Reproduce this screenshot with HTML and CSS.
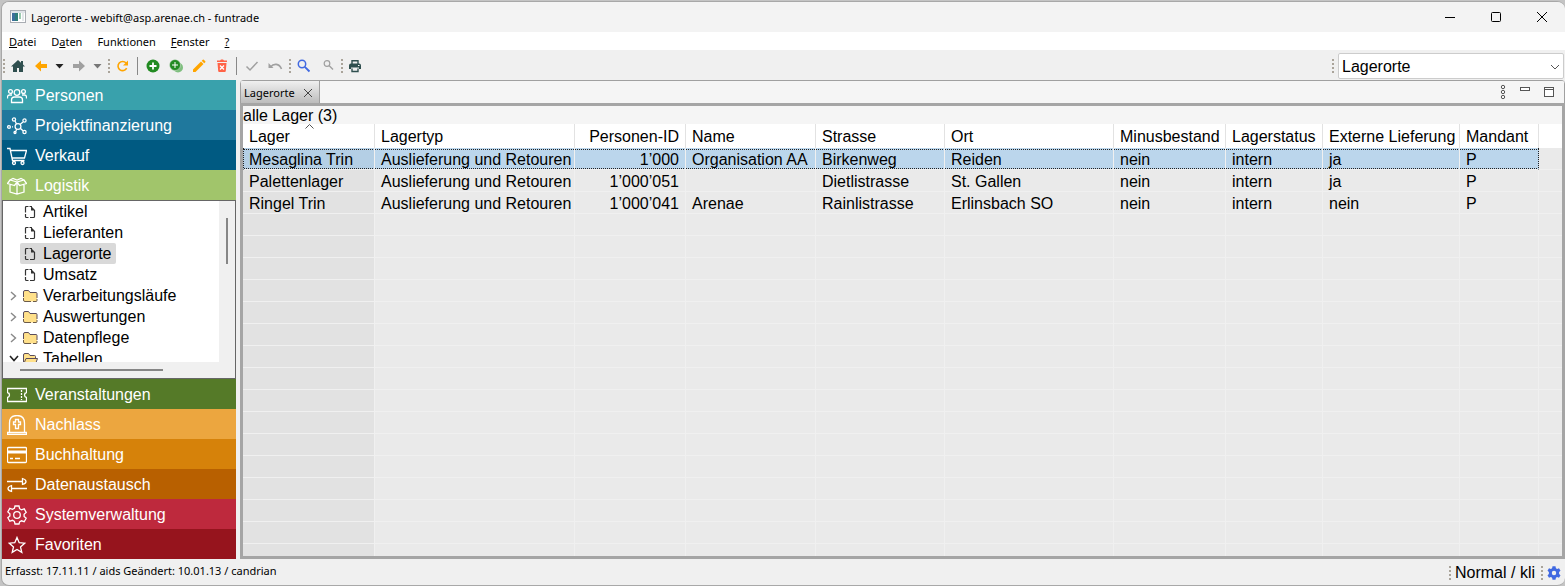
FILE: index.html
```html
<!DOCTYPE html>
<html lang="de">

<head>
    <meta charset="UTF-8">
    <meta name="viewport" content="width=device-width, initial-scale=1.0">
    <title>Lagerorte - webift@asp.arenae.ch - funtrade</title>
    <link rel="stylesheet" href="styles.css">
</head>

<body>
    <!-- tree icons, used several times -->
    <svg class="symbols" width="0" height="0">
        <symbol id="doc" viewBox="0 0 16 16"><path d="M5.500 2.500H3.500q-1 0-1 1v5M2.500 10v2.500q0 1 1 1h2M7 13.500h3.500q1 0 1-1V6M6.500 2.500H9" fill="none" stroke="#333" stroke-width="1.200"/><path d="M8 2l4 4v.6H8z" fill="#333"/></symbol>
        <symbol id="folder" viewBox="0 0 16 16"><path d="M.5 4q0-1.500 1.500-1.500h3.500L7 4.500h6q1 0 1 1V12q0 1.500-1 1.500H2Q.5 13.500.5 12z" fill="#ffe08a"/><path d="M.5 9V4q0-1.500 1.500-1.500h3.500L7 4.500h6q1 0 1 1V10" fill="none" stroke="#5a4d5c"/><path d="M.5 10v2q0 1.500 1.500 1.500h6M10 13.500h3q1 0 1-1V11" fill="none" stroke="#6b5b4a"/></symbol>
        <symbol id="folder-open" viewBox="0 0 16 16"><path d="M.5 13V4q0-1.500 1.500-1.500h3.500L7 4.500h4.500q1 0 1 1V7.500" fill="#ffe08a" stroke="#5a4d5c"/><path d="M.5 13.500L3 7.500h11.500L12.500 13q-.3.500-1 .5z" fill="#ffe08a" stroke="#5a4d5c"/></symbol>
        <symbol id="closed" viewBox="0 0 7 10"><path d="M1 1l4.500 4L1 9" fill="none" stroke="#888" stroke-width="1.400"/></symbol>
    </svg>

    <div class="window">
        <header class="titlebar">
            <svg class="app-icon" width="16" height="14" viewBox="0 0 16 14">
                <rect x="0.5" y="0.5" width="15" height="12" fill="#fff" stroke="#a9adb3"/>
                <rect x="1" y="1" width="14" height="2" fill="#dfe3e8"/>
                <rect x="2" y="3" width="6" height="8" fill="#2f7d7a"/>
                <rect x="2" y="3" width="3" height="8" fill="#3d6f9c"/>
                <rect x="9" y="3" width="2" height="6" fill="#9ccbb0"/>
                <rect x="12" y="3" width="2" height="8" fill="#e3e7ea"/>
            </svg>
            <span class="title">Lagerorte - webift@asp.arenae.ch - funtrade</span>
            <div class="win-buttons">
                <button aria-label="Minimieren"><svg width="12" height="12"><path d="M1 6.500h10" stroke="#000"/></svg></button>
                <button aria-label="Maximieren"><svg width="12" height="12"><rect x="1.500" y="1.500" width="9" height="9" rx="1" fill="none" stroke="#000"/></svg></button>
                <button aria-label="Schliessen"><svg width="12" height="12"><path d="M1 1l10 10M11 1L1 11" stroke="#000"/></svg></button>
            </div>
        </header>

        <nav class="menubar">
            <button><u>D</u>atei</button>
            <button>D<u>a</u>ten</button>
            <button>Funktionen</button>
            <button><u>F</u>enster</button>
            <button><u>?</u></button>
        </nav>

        <div class="toolbar">
            <span class="grip"></span>
            <button class="tool" aria-label="Start"><svg width="16" height="16"><path d="M8 2L1 8.500h2V14h4v-4h2v4h4V8.500h2L13 6.600V3h-2v1.800z" fill="#2f4f4f"/></svg></button>
            <button class="tool" aria-label="Zurück"><svg width="16" height="16"><path d="M2 8l6-5.500v3.500h6v4H8v3.500z" fill="#ffa500"/></svg></button>
            <button class="tool drop" aria-label="Verlauf zurück"><svg width="9" height="5"><path d="M0.500 0h8L4.500 4.500z" fill="#222"/></svg></button>
            <button class="tool" aria-label="Vorwärts"><svg width="16" height="16"><path d="M14 8L8 2.500v3.500H2v4h6v3.500z" fill="#a0a0a0"/></svg></button>
            <button class="tool drop" aria-label="Verlauf vorwärts"><svg width="9" height="5"><path d="M0.500 0h8L4.500 4.500z" fill="#777"/></svg></button>
            <span class="grip"></span>
            <button class="tool" aria-label="Aktualisieren"><svg width="16" height="16"><path d="M11.700 10.200a4.600 4.600 0 1 1-.6-5.200" fill="none" stroke="#ffa500" stroke-width="1.600"/><path d="M13 2.500v5H8z" fill="#ffa500"/></svg></button>
            <span class="bar"></span>
            <button class="tool" aria-label="Neu"><svg width="16" height="16"><circle cx="8" cy="8" r="6.500" fill="#228b22"/><path d="M8 4.500v7M4.500 8h7" stroke="#fff" stroke-width="1.800"/></svg></button>
            <button class="tool" aria-label="Kopieren"><svg width="16" height="16"><circle cx="10" cy="9.500" r="5" fill="#7fbf7f"/><circle cx="7" cy="7" r="5.500" fill="#228b22" stroke="#efefef" stroke-width="0.500"/><path d="M7 4v6M4 7h6" stroke="#fff"/></svg></button>
            <button class="tool" aria-label="Bearbeiten"><svg width="16" height="16"><path d="M2 11.500L10 3.500l2.500 2.500L4.500 14H2zM10.700 2.800l1.100-1.100q.5-.4 1 0l1.500 1.500q.4.500 0 1l-1.100 1.100z" fill="#ffa500"/></svg></button>
            <button class="tool" aria-label="Löschen"><svg width="16" height="16"><path d="M3 2.500h3l1-1h2l1 1h3V4H3zM3.500 5h9l-.7 8q-.1 1-1 1H5.200q-.9 0-1-1z" fill="#ff6347"/><path d="M6 7.500l4 4M10 7.500l-4 4" stroke="#fff" stroke-width="1.300"/></svg></button>
            <span class="bar"></span>
            <button class="tool" aria-label="Speichern"><svg width="16" height="16"><path d="M2.500 8.500l3.500 3.500L13.500 4" fill="none" stroke="#a0a0a0" stroke-width="1.500"/></svg></button>
            <button class="tool" aria-label="Rückgängig"><svg width="16" height="16"><path d="M1.500 5v5h5z" fill="#a0a0a0"/><path d="M3.500 9q2.500-3 5.800-2.600Q13 7 14.500 11" fill="none" stroke="#a0a0a0" stroke-width="1.600"/></svg></button>
            <span class="grip"></span>
            <button class="tool" aria-label="Suchen"><svg width="16" height="16"><circle cx="6" cy="6" r="3.700" fill="none" stroke="#4169e1" stroke-width="1.500"/><path d="M8.800 8.800l4.700 4.700" stroke="#4169e1" stroke-width="1.900"/></svg></button>
            <button class="tool" aria-label="Suche verfeinern"><svg width="16" height="16"><circle cx="8" cy="5.500" r="2.800" fill="none" stroke="#a0a0a0" stroke-width="1.200"/><path d="M10 7.500l4 4" stroke="#a0a0a0" stroke-width="1.500"/></svg></button>
            <span class="grip"></span>
            <button class="tool" aria-label="Drucken"><svg width="16" height="16"><path d="M4 6V2.700h6V6M4 10.500v3h6v-3" fill="none" stroke="#2f4f4f" stroke-width="1.400"/><path d="M3 5.500h8q2 0 2 2V11h-2V9.500H3V11H1V7.500q0-2 2-2z" fill="#2f4f4f"/><path d="M10 7.500h1.500" stroke="#fff"/></svg></button>

            <div class="perspective">
                <span class="grip"></span>
                <div class="combo">
                    <select aria-label="Ansicht">
                        <option>Lagerorte</option>
                    </select>
                    <svg class="chevron" width="10" height="6"><path d="M1 1l4 4 4-4" fill="none" stroke="#555"/></svg>
                </div>
            </div>
        </div>

        <main class="content">
            <nav class="sidebar">
                <button class="module personen">
                    <svg width="20" height="20"><circle cx="10" cy="6.500" r="2.800"/><circle cx="3.500" cy="5.500" r="1.900"/><circle cx="16.500" cy="5.500" r="1.900"/><path d="M4.500 16.500v-2.500q0-3 3-3h5q3 0 3 3v2.500zM.5 12.500V11q0-2 2-2h2.500M19.500 12.500V11q0-2-2-2h-2.500"/></svg>
                    Personen
                </button>
                <button class="module projekt">
                    <svg width="20" height="20"><circle cx="11" cy="10.500" r="2.900"/><circle cx="7" cy="3.500" r="1.600"/><circle cx="17.500" cy="4.500" r="1.600"/><circle cx="2" cy="11" r="1.400"/><circle cx="17.500" cy="16" r="1.600"/><circle cx="8" cy="16.500" r="1"/><path d="M8 5l1.500 3M16 6l-3 2.500M5 10.900h1M13.500 12.500l2.500 2.300M9.800 13.200l-1 2"/></svg>
                    Projektfinanzierung
                </button>
                <button class="module verkauf">
                    <svg width="20" height="20"><path d="M0 2.500h3l2.500 12h12M3.500 4.500h16l-2 7.500H5"/><circle cx="7" cy="17" r="1.500"/><circle cx="15.500" cy="17" r="1.500"/></svg>
                    Verkauf
                </button>
                <button class="module logistik">
                    <svg width="20" height="20"><path d="M3 9v7l7 2 7-2V9M10 6v12M10 6L3 4 .5 7.500 7.500 9.500 10 6l2.500 3.500 7-2L17 4zM3 4l3-1.500 4 1.500 4-1.500L17 4"/></svg>
                    Logistik
                </button>

                <div class="tree">
                    <ul class="tree-list">
                        <li><span class="toggle"></span><a href="#" class="node"><svg width="16" height="16"><use href="#doc"/></svg>Artikel</a></li>
                        <li><span class="toggle"></span><a href="#" class="node"><svg width="16" height="16"><use href="#doc"/></svg>Lieferanten</a></li>
                        <li><span class="toggle"></span><a href="#" class="node selected"><svg width="16" height="16"><use href="#doc"/></svg>Lagerorte</a></li>
                        <li><span class="toggle"></span><a href="#" class="node"><svg width="16" height="16"><use href="#doc"/></svg>Umsatz</a></li>
                        <li><span class="toggle"><svg width="7" height="10"><use href="#closed"/></svg></span><a href="#" class="node"><svg width="16" height="16"><use href="#folder"/></svg>Verarbeitungsläufe</a></li>
                        <li><span class="toggle"><svg width="7" height="10"><use href="#closed"/></svg></span><a href="#" class="node"><svg width="16" height="16"><use href="#folder"/></svg>Auswertungen</a></li>
                        <li><span class="toggle"><svg width="7" height="10"><use href="#closed"/></svg></span><a href="#" class="node"><svg width="16" height="16"><use href="#folder"/></svg>Datenpflege</a></li>
                        <li><span class="toggle"><svg width="10" height="7"><path d="M1 1l4 4.500L9 1" fill="none" stroke="#222" stroke-width="1.600"/></svg></span><a href="#" class="node"><svg width="16" height="16"><use href="#folder-open"/></svg>Tabellen</a></li>
                    </ul>
                    <div class="track-v"></div>
                    <div class="track-h"></div>
                </div>

                <button class="module veranstaltungen">
                    <svg width="20" height="20"><path d="M.5 3.500h19v4q-2 .5-2 2.500t2 2.500v4H.5v-4q2-.5 2-2.500t-2-2.500z"/><path d="M14.500 5v10" stroke-dasharray="2 1"/></svg>
                    Veranstaltungen
                </button>
                <button class="module nachlass">
                    <svg width="20" height="20"><path d="M.5 17.500h19v2H.5zM2.500 17V8q0-7.500 7.500-7.500T17.500 8v9"/><path d="M8.500 13.500V9.500h-2v-2.500h2v-2.500h3v2.500h2v2.500h-2v4z"/></svg>
                    Nachlass
                </button>
                <button class="module buchhaltung">
                    <svg width="20" height="20"><rect x="0.5" y="2.500" width="19" height="15" rx="1"/><path d="M1 7h18" stroke-width="3"/><path d="M3 13.500h3M8 13.500h5"/></svg>
                    Buchhaltung
                </button>
                <button class="module datenaustausch">
                    <svg width="20" height="20"><path d="M0 6.500h15.500M20 13.500H4.500M15.500 3.500v6q3.500-1 3.500-3t-3.500-3zM4.500 10.500v6Q1 15.500 1 13.500t3.500-3z"/></svg>
                    Datenaustausch
                </button>
                <button class="module system">
                    <svg width="20" height="20"><path d="M8 1h4l.6 2.700 1.900 1.100 2.700-.9 2 3.500-2.100 1.800v2.200l2.100 1.800-2 3.500-2.700-.9-1.900 1.100L12 19H8l-.6-2.600-1.900-1.100-2.700.9-2-3.500 2.100-1.800V8.700L.8 6.900l2-3.500 2.700.9 1.900-1.100z"/><circle cx="10" cy="10" r="3.300"/></svg>
                    Systemverwaltung
                </button>
                <button class="module favoriten">
                    <svg width="20" height="20"><path d="M10 2.500l2.200 5.200 5.500.5-4.200 3.700 1.300 5.500L10 14.500l-4.800 2.900 1.300-5.500L2.300 8.200l5.500-.5z"/></svg>
                    Favoriten
                </button>
            </nav>

            <section class="editor">
                <div class="tabs">
                    <div class="tab">
                        <span>Lagerorte</span>
                        <button aria-label="Lagerorte schliessen"><svg width="10" height="10"><path d="M1 1l8 8M9 1L1 9" stroke="#444"/></svg></button>
                    </div>
                    <div class="view-buttons">
                        <button aria-label="Ansichtsmenü"><svg width="6" height="16" fill="none" stroke="#555"><circle cx="3" cy="3" r="1.700"/><circle cx="3" cy="8" r="1.700"/><circle cx="3" cy="13" r="1.700"/></svg></button>
                        <button aria-label="Ansicht minimieren"><svg width="10" height="16"><rect x="0.500" y="3.500" width="9" height="3" fill="#fff" stroke="#555"/></svg></button>
                        <button aria-label="Ansicht maximieren"><svg width="10" height="16"><rect x="0.500" y="3.500" width="9" height="9" fill="#fff" stroke="#555"/><path d="M0 5.500h10" stroke="#555"/></svg></button>
                    </div>
                </div>
                <div class="pane">
                    <div class="caption">alle Lager (3)</div>
                    <div class="grid">
                        <table>
                            <colgroup>
                                <col class="c-lager"><col class="c-typ"><col class="c-id"><col class="c-name"><col class="c-strasse"><col class="c-ort">
                                <col class="c-minus"><col class="c-status"><col class="c-extern"><col class="c-mandant"><col>
                            </colgroup>
                            <thead>
                                <tr>
                                    <th>Lager<svg class="sort" width="9" height="5"><path d="M0.500 4.500l4-4 4 4" fill="none" stroke="#555"/></svg></th>
                                    <th>Lagertyp</th>
                                    <th class="num">Personen-ID</th>
                                    <th>Name</th>
                                    <th>Strasse</th>
                                    <th>Ort</th>
                                    <th>Minusbestand</th>
                                    <th>Lagerstatus</th>
                                    <th>Externe Lieferung</th>
                                    <th>Mandant</th>
                                    <th></th>
                                </tr>
                            </thead>
                            <tbody>
                                <tr class="active">
                                    <td>Mesaglina Trin</td>
                                    <td>Auslieferung und Retouren</td>
                                    <td class="num">1’000</td>
                                    <td>Organisation AA</td>
                                    <td>Birkenweg</td>
                                    <td>Reiden</td>
                                    <td>nein</td>
                                    <td>intern</td>
                                    <td>ja</td>
                                    <td>P</td>
                                    <td></td>
                                </tr>
                                <tr>
                                    <td>Palettenlager</td>
                                    <td>Auslieferung und Retouren</td>
                                    <td class="num">1’000’051</td>
                                    <td></td>
                                    <td>Dietlistrasse</td>
                                    <td>St. Gallen</td>
                                    <td>nein</td>
                                    <td>intern</td>
                                    <td>ja</td>
                                    <td>P</td>
                                    <td></td>
                                </tr>
                                <tr>
                                    <td>Ringel Trin</td>
                                    <td>Auslieferung und Retouren</td>
                                    <td class="num">1’000’041</td>
                                    <td>Arenae</td>
                                    <td>Rainlistrasse</td>
                                    <td>Erlinsbach SO</td>
                                    <td>nein</td>
                                    <td>intern</td>
                                    <td>nein</td>
                                    <td>P</td>
                                    <td></td>
                                </tr>
                                <!-- takes the rest of the height, the lines are a background -->
                                <tr class="filler">
                                    <td></td><td></td><td></td><td></td><td></td><td></td><td></td><td></td><td></td><td></td><td></td>
                                </tr>
                            </tbody>
                        </table>
                    </div>
                </div>
            </section>
        </main>

        <footer class="statusbar">
            <span class="record">Erfasst: 17.11.11 / aids Geändert: 10.01.13 / candrian</span>
            <div class="session">
                <span class="grip"></span>
                <span class="user">Normal / kli</span>
                <span class="grip"></span>
                <button aria-label="Einstellungen"><svg width="14" height="14"><path fill-rule="evenodd" fill="#4169e1" d="M5.500 0.300h3l.4 1.900 1.200.7 1.900-.7 1.500 2.500L12.100 6v2l1.400 1.300-1.500 2.500-1.900-.7-1.200.7-.4 1.900h-3l-.4-1.900-1.200-.7-1.900.7L.5 9.300 1.900 8V6L.5 4.700l1.500-2.500 1.900.7 1.200-.7zM7 4.800a2.200 2.200 0 1 0 0 4.400 2.200 2.200 0 0 0 0-4.400z"/></svg></button>
            </div>
        </footer>
    </div>
</body>

</html>
```
FILE: styles.css
```css
*{
    box-sizing: border-box;
}
body{
    margin: 0;
    height: 100vh;
    padding: 1px 0 0 1px;
    background-color: #c4c4c4;
    color: #000;
    font-family: "Liberation Sans", Arial, sans-serif;
    font-size: 16px;
    overflow: hidden;
}
button{
    border: 0;
    padding: 0;
    background: none;
    font: inherit;
    color: inherit;
}
svg{
    display: block;
    flex: none;
}
.symbols{
    position: absolute;
}
.window{
    height: 100%;
    display: flex;
    flex-direction: column;
    border: 1px solid #a8a8a8;
    border-right: 0;
    border-radius: 8px;
    background-color: #f0f0f0;
    overflow: hidden;
}

/* title and menu */
.titlebar{
    height: 30px;
    flex: none;
    display: flex;
    align-items: center;
    padding-left: 8px;
    background-color: #f3f3f3;
}
.title,
.menubar,
.tab,
.record{
    font-family: "Noto Sans", "Segoe UI", sans-serif;
    font-size: 11px;
}
.title{
    margin-left: 5px;
}
.win-buttons{
    margin-left: auto;
    display: flex;
    height: 100%;
}
.win-buttons button{
    width: 46px;
    display: flex;
    align-items: center;
    justify-content: center;
}
.menubar{
    height: 18px;
    flex: none;
    display: flex;
    align-items: center;
    gap: 15px;
    padding: 1px 0 0 7px;
    background-color: #fff;
}
.menubar button{
    line-height: 18px;
}

/* toolbar */
.toolbar{
    height: 30px;
    flex: none;
    display: flex;
    align-items: center;
    padding-top: 2px;
}
.tool{
    width: 23px;
    height: 24px;
    display: flex;
    align-items: center;
    justify-content: center;
}
.drop{
    width: 15px;
}
.grip{
    flex: none;
    width: 2px;
    height: 14px;
    margin: 0 1px 0 3px;
    background: repeating-linear-gradient(#aaa49a 0 2px, transparent 2px 4px);
}
.grip:first-child{
    margin-left: 1px;
}
.bar{
    width: 1px;
    height: 18px;
    margin: 0 3px;
    background-color: #888;
}
.perspective{
    margin-left: auto;
    display: flex;
    align-items: center;
    gap: 3px;
    padding-right: 1px;
}
.combo{
    position: relative;
}
.combo select{
    appearance: none;
    display: block;
    width: 226px;
    height: 26px;
    padding: 0 24px 0 3px;
    border: 1px solid #ccc;
    border-radius: 2px;
    background-color: #fff;
    color: #000;
    font: inherit;
}
.chevron{
    position: absolute;
    right: 4px;
    top: 11px;
    pointer-events: none;
}

/* main area */
.content{
    flex: 1;
    min-height: 0;
    display: flex;
    gap: 4px;
}
.sidebar{
    width: 234px;
    flex: none;
    display: flex;
    flex-direction: column;
}
.module{
    height: 30px;
    flex: none;
    display: flex;
    align-items: center;
    gap: 8px;
    padding: 2px 0 0 5px;
    color: #fff;
    text-align: left;
}
.module svg{
    fill: none;
    stroke: #fff;
    stroke-width: 1.3;
}
.personen{
    background-color: #39a1ac;
}
.projekt{
    background-color: #1f789d;
}
.verkauf{
    background-color: #005a82;
}
.logistik{
    background-color: #a1c56b;
}
.veranstaltungen{
    background-color: #557a28;
}
.nachlass{
    background-color: #eca63f;
}
.buchhaltung{
    background-color: #d6820a;
}
.datenaustausch{
    background-color: #b86000;
}
.system{
    background-color: #be293d;
}
.favoriten{
    background-color: #96141d;
}

/* navigation tree */
.tree{
    flex: 1;
    min-height: 0;
    display: grid;
    grid-template-columns: 1fr 16px;
    grid-template-rows: minmax(0, 1fr) 16px;
    border: 1px solid #666;
}
.tree-list{
    margin: 0;
    padding: 0;
    list-style: none;
    background-color: #fff;
    overflow: hidden;
}
.tree-list li{
    height: 21px;
    display: flex;
}
.toggle{
    width: 17px;
    display: flex;
    align-items: center;
    justify-content: center;
    padding-left: 4px;
}
.node{
    display: flex;
    align-items: center;
    gap: 4px;
    padding: 0 4px 0 3px;
    border-radius: 2px;
    color: #000;
    text-decoration: none;
}
.selected{
    background-color: #d9d9d9;
}
.track-v::before,
.track-h::before{
    content: "";
    display: block;
    background-color: #868686;
}
.track-v{
    padding: 17px 7px;
}
.track-v::before{
    height: 46px;
}
.track-h{
    padding: 7px 17px;
}
.track-h::before{
    width: 143px;
    height: 2px;
}

/* editor */
.editor{
    flex: 1;
    min-width: 0;
    display: flex;
    flex-direction: column;
    border-top: 1px solid #a0a0a0;
    border-radius: 4px 4px 0 0;
    overflow: hidden;
}
.tabs{
    height: 22px;
    flex: none;
    display: flex;
    justify-content: space-between;
    border: 1px solid #a0a0a0;
    border-width: 0 1px;
    background-color: #f5f5f5;
}
.tab{
    display: flex;
    align-items: center;
    gap: 8px;
    padding: 1px 6px 0 3px;
    border-right: 1px solid #a0a0a0;
    background: linear-gradient(#f0f0f0, #bcbcbc);
}
.view-buttons{
    display: flex;
    align-items: center;
    gap: 14px;
    padding-right: 10px;
}
.pane{
    flex: 1;
    min-height: 0;
    display: flex;
    flex-direction: column;
    border: 3px solid #a5a5a5;
    background-color: #f5f5f5;
}
.caption{
    height: 18px;
    flex: none;
    line-height: 20px;
}
.grid{
    flex: 1;
    min-height: 0;
    overflow: hidden;
}
table{
    width: 100%;
    height: 100%;
    table-layout: fixed;
    border-collapse: separate;
    border-spacing: 0;
}
.c-lager{
    width: 132px;
}
.c-typ{
    width: 200px;
}
.c-id{
    width: 111px;
}
.c-name{
    width: 130px;
}
.c-strasse{
    width: 129px;
}
.c-ort{
    width: 169px;
}
.c-minus{
    width: 112px;
}
.c-status{
    width: 97px;
}
.c-extern{
    width: 137px;
}
.c-mandant{
    width: 79px;
}
th,
td{
    padding: 2px 6px 0;
    line-height: 18px;
    text-align: left;
    white-space: nowrap;
}
th{
    position: relative;
    height: 24px;
    border-right: 1px solid #e2e2e2;
    background-color: #fff;
    font-weight: normal;
}
td{
    height: 22px;
    border-right: 1px solid #f0f0f0;
    border-bottom: 1px solid #f0f0f0;
    background-color: #eaeaea;
}
td:first-child{
    background-color: #e2e2e2;
}
th:last-child,
td:last-child{
    border-right: 0;
}
.num{
    text-align: right;
}
.sort{
    position: absolute;
    left: 62px;
    top: 0;
}
.active td:not(:last-child){
    background-color: #bbd6ec;
    background-image: repeating-linear-gradient(to right, #222 0 1px, transparent 1px 2px), repeating-linear-gradient(to right, #222 0 1px, transparent 1px 2px);
    background-size: 100% 1px;
    background-position: 0 1px, 0 20px;
    background-repeat: no-repeat;
}
.active td:first-child:not(:last-child){
    background-color: #b4cfe5;
    border-left: 1px dotted #222;
    padding-left: 5px;
}
.active td:nth-last-child(2){
    border-right: 1px dotted #222;
}
.filler td{
    height: auto;
    border-bottom: 0;
    background-image: repeating-linear-gradient(transparent 0 21px, #f0f0f0 21px 22px);
}

/* status bar */
.statusbar{
    height: 26px;
    flex: none;
    display: flex;
    justify-content: space-between;
    align-items: center;
    padding: 1px 4px 0 3px;
}
.record{
    align-self: flex-start;
    line-height: 22px;
}
.session{
    display: flex;
    align-items: center;
    gap: 3px;
}
```
